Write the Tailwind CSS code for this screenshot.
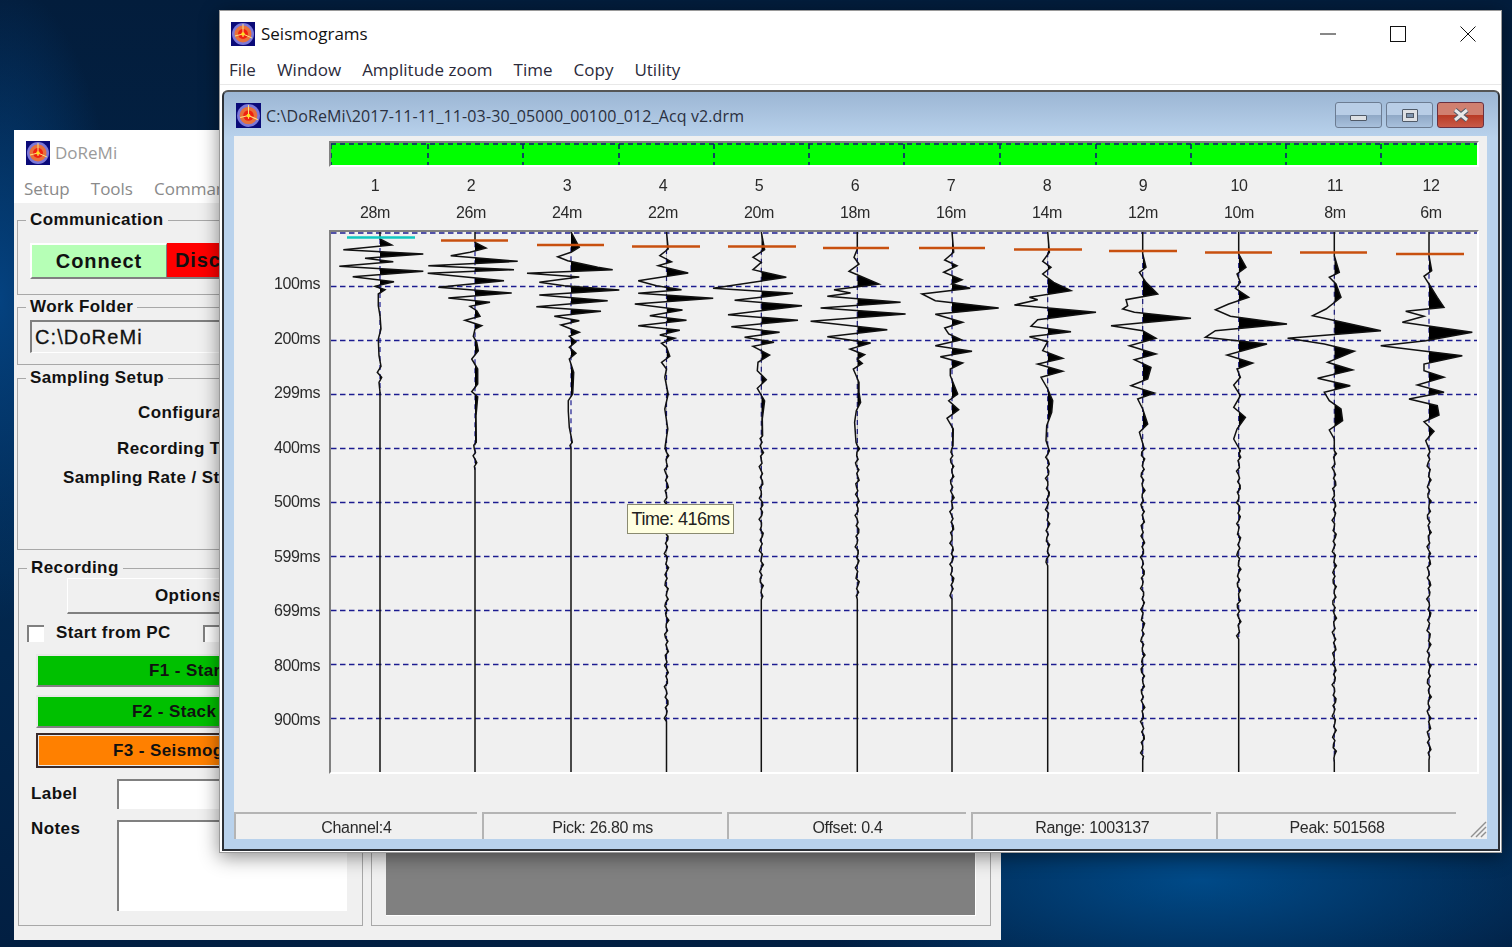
<!DOCTYPE html>
<html lang="en">
<head>
<meta charset="UTF-8" />
<title>Seismograms</title>
<script src="https://cdn.jsdelivr.net/npm/@tailwindcss/browser@4"></script>
</head>
<body class="bg-[#02203f]">
<svg width="0" height="0" class="absolute">
  <symbol id="app-icon" viewBox="0 0 24 24">
    <rect width="24" height="24" fill="#0a0a78" />
    <circle cx="12" cy="12" r="11" fill="#7c78d8" />
    <circle cx="12" cy="12" r="8.5" fill="#e8703a" />
    <circle cx="12" cy="12" r="5" fill="#f02010" />
    <path d="M12 2V15M12 12L21 16M12 12L4 14" stroke="#ffe080" stroke-width="1" fill="none" />
    <circle cx="12" cy="12" r="1.8" fill="#ffe020" />
  </symbol>
</svg>

<div class="relative w-[1512px] h-[947px] overflow-hidden bg-[radial-gradient(ellipse_420px_130px_at_1200px_880px,#004a88,transparent),radial-gradient(ellipse_120px_320px_at_0px_300px,#044280,transparent),linear-gradient(180deg,#031d3c,#02284f_60%,#021f42)]">

  <!-- DoReMi main window, behind -->
  <div class="absolute left-[14px] top-[130px] w-[987px] h-[810px] flex flex-col bg-white font-['Liberation_Sans',sans-serif] text-black">
    <div class="h-[44px] flex items-center pl-[12px] gap-[5px] pt-[2px]">
      <svg class="w-[24px] h-[24px]"><use href="#app-icon" /></svg>
      <span class="font-['Open_Sans',sans-serif] text-[17px] text-[#9a9a9a]">DoReMi</span>
    </div>
    <div class="h-[29px] flex items-center pl-[10px] gap-[21px] font-['Open_Sans',sans-serif] text-[17px] text-[#8a8a8a]">
      <span>Setup</span><span>Tools</span><span>Command</span>
    </div>
    <div class="flex-1 flex bg-[#f0f0f0] pl-[3px] pt-[8px] gap-[8px]">
      <div class="w-[346px] flex flex-col text-[17px] font-bold tracking-[0.4px] text-[#111]">
        <fieldset class="w-[346px] h-[84px] border border-[#a8a8a8]">
          <legend class="ml-[8px] px-[4px] h-[18px] leading-[18px]">Communication</legend>
          <div class="flex pl-[12px] pt-[14px]">
            <div class="w-[137px] h-[36px] flex items-center justify-center bg-[#b6ffb6] border-t-2 border-l-2 border-white border-b-2 border-b-[#808080] border-r border-r-[#808080] text-[20px] tracking-[0.9px]">Connect</div>
            <div class="w-[137px] h-[36px] flex items-center pl-[8px] bg-[#ff0000] border-b-2 border-b-[#808080] text-[20px] tracking-[0.9px]">Disconnect</div>
          </div>
        </fieldset>
        <fieldset class="w-[346px] h-[67px] mt-[3px] border border-[#a8a8a8]">
          <legend class="ml-[8px] px-[4px] h-[18px] leading-[18px]">Work Folder</legend>
          <div class="ml-[12px] mt-[4px] w-[300px] h-[33px] flex items-center pl-[3px] bg-[#f0f0f0] border-t-2 border-l-2 border-[#808080] border-b border-r border-b-white border-r-white text-[20px] font-normal tracking-[1.1px] [-webkit-text-stroke:0.3px_#111]">C:\DoReMi</div>
        </fieldset>
        <fieldset class="w-[346px] h-[181px] mt-[4px] border border-[#a8a8a8]">
          <legend class="ml-[8px] px-[4px] h-[18px] leading-[18px]">Sampling Setup</legend>
          <div class="mt-[16px] h-[20px] leading-[20px] pl-[120px]">Configuration</div>
          <div class="mt-[16px] h-[20px] leading-[20px] pl-[99px]">Recording Time</div>
          <div class="mt-[9px] h-[20px] leading-[20px] pl-[45px]">Sampling Rate / Stacks</div>
        </fieldset>
        <fieldset class="ml-px w-[345px] h-[367px] mt-[9px] border border-[#a8a8a8]">
          <legend class="ml-[8px] px-[4px] h-[18px] leading-[18px]">Recording</legend>
          <div class="ml-[48px] mt-px w-[280px] h-[36px] flex items-center pl-[87px] border-t border-l border-white border-b-2 border-b-[#808080]">Options</div>
          <div class="flex items-center mt-[10px] ml-[8px] h-[18px]">
            <span class="w-[17px] h-[17px] bg-white border-t-2 border-l-2 border-[#808080]"></span>
            <span class="ml-[12px] w-[147px]">Start from PC</span>
            <span class="w-[17px] h-[17px] bg-white border-t-2 border-l-2 border-[#808080]"></span>
          </div>
          <div class="ml-[17px] mt-[12px] w-[310px] h-[33px] flex items-center pl-[111px] bg-[#00c000] border-t-2 border-l-2 border-[#e8e8e8] border-b-2 border-b-[#808080]">F1 - Start</div>
          <div class="ml-[17px] mt-[8px] w-[310px] h-[33px] flex items-center pl-[94px] bg-[#00c000] border-t-2 border-l-2 border-[#e8e8e8] border-b-2 border-b-[#808080]">F2 - Stack</div>
          <div class="ml-[17px] mt-[5px] w-[310px] h-[35px] flex items-center pl-[75px] bg-[#ff8000] border-2 border-[#3a2a2a] outline outline-1 -outline-offset-3 outline-[#e8e8e8]">F3 - Seismograms</div>
          <div class="flex mt-[11px] ml-[12px]">
            <span class="w-[86px] leading-[30px]">Label</span>
            <div class="w-[230px] h-[30px] bg-white border-t-2 border-l-2 border-[#808080]"></div>
          </div>
          <div class="flex mt-[11px] ml-[12px]">
            <span class="w-[86px] leading-[18px]">Notes</span>
            <div class="w-[230px] h-[91px] bg-white border-t-2 border-l-2 border-[#808080]"></div>
          </div>
        </fieldset>
      </div>
      <fieldset class="w-[620px] h-[715px] border border-[#a8a8a8] flex flex-col justify-end">
        <legend class="ml-[8px] px-[4px] h-[18px]"></legend>
        <div class="h-[300px] mx-[14px] mb-[9px] bg-[#808080] border-b border-r border-b-white border-r-white"></div>
      </fieldset>
    </div>
  </div>

  <!-- Seismograms window -->
  <div class="absolute left-[219px] top-[10px] w-[1283px] h-[843px] flex flex-col bg-white border border-[#9a9a9a] shadow-[0_4px_18px_rgba(0,0,0,0.45)] font-['Liberation_Sans',sans-serif]">
    <div class="h-[45px] flex items-center pl-[11px] pt-[1px]">
      <svg class="w-[24px] h-[24px]"><use href="#app-icon" /></svg>
      <span class="ml-[6px] font-['Open_Sans',sans-serif] text-[17px] text-[#111]">Seismograms</span>
      <div class="ml-auto flex items-center mr-[25px] gap-[54px]">
        <svg width="16" height="16" viewBox="0 0 16 16"><path d="M0 8H16" stroke="#111" /></svg>
        <svg width="16" height="16" viewBox="0 0 16 16"><rect x="0.5" y="0.5" width="15" height="15" fill="none" stroke="#111" /></svg>
        <svg width="16" height="16" viewBox="0 0 16 16"><path d="M0.5 0.5L15.5 15.5M15.5 0.5L0.5 15.5" stroke="#111" /></svg>
      </div>
    </div>
    <div class="h-[29px] flex items-center pl-[9px] gap-[21px] font-['Open_Sans',sans-serif] text-[17px] text-[#2a2a3a] border-b border-[#e8e8e8]">
      <span>File</span><span>Window</span><span>Amplitude zoom</span><span>Time</span><span>Copy</span><span>Utility</span>
    </div>

    <!-- child window -->
    <div class="mt-[5px] mx-[2px] w-[1278px] h-[761px] flex flex-col rounded-t-[6px] border-2 border-[#2c3036] border-t-[#555] bg-[linear-gradient(180deg,#9cb6d4,#b9d2ec_46px)]">
      <div class="h-[44px] flex items-center pl-[12px] text-[#2a3040]">
        <svg class="w-[25px] h-[25px] mt-[3px]"><use href="#app-icon" /></svg>
        <span class="ml-[5px] mt-[4px] font-['Open_Sans',sans-serif] text-[16px] tracking-[0.12px]">C:\DoReMi\2017-11-11_11-03-30_05000_00100_012_Acq v2.drm</span>
        <div class="ml-auto mr-[14px] mt-[2px] flex gap-[4px]">
          <div class="w-[47px] h-[26px] flex items-center justify-center rounded-[3px] border border-[#6c7c92] bg-[linear-gradient(180deg,#b8cde6_50%,#8fa8c6_50%,#a8c0dc)]">
            <span class="mt-[6px] w-[17px] h-[6px] rounded-[1px] bg-[#dde0e4] border border-[#505a68]"></span>
          </div>
          <div class="w-[47px] h-[26px] flex items-center justify-center rounded-[3px] border border-[#6c7c92] bg-[linear-gradient(180deg,#b8cde6_50%,#8fa8c6_50%,#a8c0dc)]">
            <span class="w-[16px] h-[13px] flex items-center justify-center rounded-[1px] bg-[#dde0e4] border border-[#505a68]"><span class="w-[8px] h-[5px] bg-[#7f94ad] border border-[#505a68]"></span></span>
          </div>
          <div class="w-[47px] h-[26px] flex items-center justify-center rounded-[3px] border border-[#6a3040] bg-[linear-gradient(180deg,#d08070_50%,#b83a24_50%,#c85a48)]">
            <svg width="18" height="14" viewBox="0 0 18 14"><path d="M3 2L15 12M15 2L3 12" stroke="#505a68" stroke-width="5" /><path d="M3 2L15 12M15 2L3 12" stroke="#e8e8e8" stroke-width="3" /></svg>
          </div>
        </div>
      </div>

      <div class="ml-[10px] mr-[11px] w-[1253px] h-[703px] bg-[#f0f0f0] flex flex-col text-[16px] text-[#2a2a2a] blur-[0.3px]">
        <div class="ml-[95px] mt-[5px] w-[1150px] h-[27px] p-[2px] bg-[#00ff00] border-t-2 border-l-2 border-[#808080] border-b-2 border-r-2 border-b-white border-r-white relative">
          <svg class="absolute left-0 top-0" width="1146" height="23" viewBox="331 143 1146 23">
            <path id="bar-grid" fill="none" stroke="#10107a" stroke-width="1.5" stroke-dasharray="5 4" d="M331 144H1477M331 144V165M428 144V165M523 144V165M619 144V165M714 144V165M809 144V165M904 144V165M1000 144V165M1096 144V165M1191 144V165M1286 144V165M1381 144V165" />
          </svg>
        </div>
        <div class="ml-[93px] mt-[5px] w-[1152px] grid grid-cols-12 text-center leading-[27px] tracking-[-0.4px]">
          <span>1</span><span>2</span><span>3</span><span>4</span><span>5</span><span>6</span><span>7</span><span>8</span><span>9</span><span>10</span><span>11</span><span>12</span>
          <span>28m</span><span>26m</span><span>24m</span><span>22m</span><span>20m</span><span>18m</span><span>16m</span><span>14m</span><span>12m</span><span>10m</span><span>8m</span><span>6m</span>
        </div>
        <div class="flex mt-[4px] h-[544px]">
          <div class="w-[95px] pt-[27px] pr-[9px] text-right tracking-[-0.4px]">
            <div class="h-[54.5px] leading-[54px]">100ms</div>
            <div class="h-[54.5px] leading-[54px]">200ms</div>
            <div class="h-[54.5px] leading-[54px]">299ms</div>
            <div class="h-[54.5px] leading-[54px]">400ms</div>
            <div class="h-[54.5px] leading-[54px]">500ms</div>
            <div class="h-[54.5px] leading-[54px]">599ms</div>
            <div class="h-[54.5px] leading-[54px]">699ms</div>
            <div class="h-[54.5px] leading-[54px]">800ms</div>
            <div class="h-[54.5px] leading-[54px]">900ms</div>
          </div>
          <div class="relative w-[1150px] border-t-2 border-l-2 border-[#808080] border-b-2 border-r-2 border-b-white border-r-white">
            <svg id="plot" class="block" width="1146" height="540" viewBox="331 233 1146 540"></svg>
          </div>
        </div>
        <div class="flex mt-[38px] h-[27px] text-center leading-[27px] tracking-[-0.3px] gap-[5px]">
          <div class="w-[243px] border-t-2 border-l-2 border-[#b4b4b4]">Channel:4</div>
          <div class="w-[240px] border-t-2 border-l-2 border-[#b4b4b4]">Pick: 26.80 ms</div>
          <div class="w-[240px] border-t-2 border-l-2 border-[#b4b4b4]">Offset: 0.4</div>
          <div class="w-[240px] border-t-2 border-l-2 border-[#b4b4b4]">Range: 1003137</div>
          <div class="w-[240px] border-t-2 border-l-2 border-[#b4b4b4]">Peak: 501568</div>
          <svg class="mt-[9px] ml-[9px]" width="17" height="17" viewBox="0 0 17 17"><path d="M1 16L16 1M6 16L16 6M11 16L16 11" stroke="#909090" stroke-width="1.4" /></svg>
        </div>
      </div>
    </div>
  </div>

  <!-- tooltip over the plot -->
  <div class="absolute left-[627px] top-[504px] w-[107px] h-[30px] flex items-center justify-center bg-[#ffffe1] border border-[#8a8a70] font-['Liberation_Sans',sans-serif] text-[18px] tracking-[-0.5px] text-[#222]">Time: 416ms</div>
</div>

<script>
    // [y, dx] read off the 3x crops, so y is (page y - 230) * 3 and dx is px * 3
    const traces = [
        { x: 380, end: 395, pick: [347, 415, 238.5], pts: [[30,0],[48,35],[62,-110],[75,130],[88,-45],[98,40],[112,-122],[127,130],[143,-82],[158,42],[172,-15],[182,15],[195,-5],[230,-5],[260,0],[300,3],[330,-5],[380,-3],[412,3],[430,-8],[445,5],[460,-3],[490,0]] },
        { x: 475, end: 470, pick: [441, 508, 241.5], pts: [[40,0],[57,33],[70,-15],[80,-73],[97,128],[110,-140],[122,117],[133,-142],[155,87],[175,-110],[192,110],[207,-80],[220,45],[232,-15],[245,5],[262,15],[274,-30],[290,20],[300,0],[322,-5],[340,5],[365,10],[390,-10],[420,8],[465,8],[488,-10],[503,8],[560,3],[640,4]] },
        { x: 571, end: 447, pick: [537, 604, 246], pts: [[55,25],[70,0],[83,-40],[95,-10],[115,80],[122,125],[133,-132],[144,25],[160,-95],[170,-20],[183,145],[198,-95],[215,110],[233,-104],[247,90],[262,-50],[275,25],[288,-30],[300,0],[310,25],[322,-5],[338,15],[355,-5],[373,15],[390,-5],[430,8],[495,5],[515,-8],[547,-8],[595,-5],[640,4]] },
        { x: 666.5, end: 720, pick: [632, 700, 247.5], pts: [[60,5],[80,-20],[98,15],[110,-25],[132,65],[155,-85],[170,-30],[182,45],[193,-85],[208,140],[225,-95],[243,48],[260,-50],[274,60],[290,-85],[304,40],[318,-20],[328,25],[343,-15],[355,0],[382,10],[400,-15],[420,0],[445,-5],[495,5],[540,-5],[600,4],[650,-4]] },
        { x: 761.3, end: 600, pick: [728, 796, 247.5], pts: [[62,10],[85,-25],[100,0],[122,-25],[145,75],[178,-145],[193,95],[214,-80],[230,122],[257,-100],[274,110],[293,-90],[310,55],[325,-50],[340,38],[352,-25],[378,25],[400,-10],[425,-12],[452,15],[478,-12],[516,10],[570,3],[620,4]] },
        { x: 857.3, end: 600, pick: [823, 889, 249], pts: [[60,0],[85,-10],[105,5],[127,-25],[165,65],[182,-70],[192,-20],[202,-90],[220,130],[237,-110],[255,145],[277,-140],[302,90],[323,-90],[342,40],[360,-22],[377,22],[390,0],[403,15],[420,-12],[460,5],[490,5],[520,10],[545,-3],[580,-8],[640,-4]] },
        { x: 952, end: 600, pick: [919, 985, 249], pts: [[70,5],[93,-22],[110,15],[130,-25],[152,30],[165,0],[178,55],[195,-90],[215,-50],[237,140],[256,-50],[280,32],[297,-22],[315,-10],[332,28],[350,-50],[367,60],[383,-35],[402,32],[420,-5],[440,-5],[495,17],[515,-10],[542,20],[568,-15],[600,4],[650,3]] },
        { x: 1047.7, end: 565, pick: [1014, 1082, 250.5], pts: [[70,5],[97,-15],[115,10],[135,-15],[160,18],[185,70],[205,-55],[212,-30],[228,-100],[250,145],[272,-30],[292,-50],[308,70],[323,-55],[338,0],[365,-15],[388,45],[405,-30],[427,45],[445,-20],[480,0],[515,15],[550,12],[590,-3],[635,-5],[665,5]] },
        { x: 1142.7, end: 760, pick: [1109, 1177, 252], pts: [[75,0],[115,10],[130,-10],[160,10],[195,45],[212,-50],[230,-45],[240,-60],[250,-25],[268,145],[290,-95],[305,0],[328,40],[350,-40],[375,40],[392,-25],[415,25],[450,15],[470,-35],[492,35],[510,-15],[540,0],[585,15],[610,-10],[660,5]] },
        { x: 1238.7, end: 640, pick: [1205, 1272, 253.5], pts: [[75,0],[115,22],[135,-5],[160,5],[178,-10],[205,30],[225,-30],[242,-70],[262,-25],[285,145],[305,-70],[325,-100],[345,85],[378,-35],[402,42],[420,-5],[445,5],[468,-15],[500,5],[535,-15],[565,20],[600,-5],[630,-15],[665,5]] },
        { x: 1334.3, end: 760, pick: [1300, 1367, 253.5], pts: [[80,0],[130,15],[145,-15],[165,5],[205,20],[240,-25],[260,-65],[272,-10],[305,140],[328,-140],[345,-30],[367,60],[400,-20],[423,55],[448,-50],[470,48],[490,-30],[515,-15],[540,20],[575,25],[603,-15],[630,0],[665,0]] },
        { x: 1429, end: 760, pick: [1396, 1464, 255], pts: [[80,0],[125,8],[142,-15],[165,0],[205,25],[235,45],[247,-70],[262,-15],[280,-80],[310,130],[335,-10],[350,-145],[380,100],[405,-15],[425,-15],[445,45],[468,-35],[490,45],[510,-60],[530,25],[558,30],[578,-15],[607,15],[635,-10],[660,0]] },
    ];

    function renderPlot() {
        let out = "";

        // time grid
        [234, 287.5, 341.5, 395.5, 449.5, 503.5, 557.5, 611.5, 665.5, 719.5].forEach(y => {
            out += `<path d="M331 ${y}H1477" stroke="#1c1c90" stroke-width="1.5" stroke-dasharray="5.5 3.5" />`;
        });

        traces.forEach((t, i) => {
            let line = [[t.x, 233]];
            t.pts.forEach(p => line.push([t.x + p[1] / 3, 230 + p[0] / 3]));

            // quiet tail after the readings
            let y = line[line.length - 1][1] + 3;
            for (; y < t.end; y += 3.5) {
                const dx = 1.5 * Math.sin(y * 0.61 + i * 2) + 0.8 * Math.sin(y * 0.23 + i);
                line.push([t.x + dx, y]);
            }
            line.push([t.x, y]);
            line.push([t.x, 773]);

            const d = line.map((p, n) => (n ? "L" : "M") + p[0].toFixed(1) + " " + p[1].toFixed(1)).join("");
            const fromY = t.pts[0][0] / 3 + 230;

            out += `<path d="M${t.x} ${fromY}V${y}" stroke="#1c1c90" stroke-width="1.2" stroke-dasharray="5 4" />`;
            out += `<clipPath id="right${i}"><rect x="${t.x}" y="233" width="60" height="540" /></clipPath>`;
            out += `<path d="${d}Z" fill="#000" stroke="none" clip-path="url(#right${i})" />`;
            out += `<path d="${d}" fill="none" stroke="#111" stroke-width="1.5" />`;

            const color = i === 0 ? "#10c8c0" : "#c8500f";
            out += `<path d="M${t.pick[0]} ${t.pick[2]}H${t.pick[1]}" stroke="${color}" stroke-width="2.4" />`;
        });

        document.getElementById("plot").innerHTML = out;
    }

    renderPlot();
</script>
</body>
</html>
